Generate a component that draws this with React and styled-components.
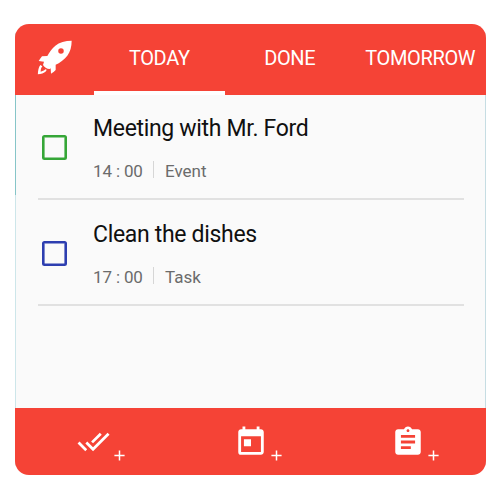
import React from "react";
import styled, { createGlobalStyle } from "styled-components";
import { MdDoneAll, MdToday, MdAssignment } from "react-icons/md";

const RED = "#f54336";

const GlobalStyle = createGlobalStyle`
  * { box-sizing: border-box; }
  body { margin: 0; background: #fff; font-family: Roboto, sans-serif; }
`;

const Page = styled.div`
  width: 500px;
  height: 500px;
  padding: 24px 14px 25.5px 15px;
  overflow: hidden;
`;

const Card = styled.main`
  display: flex;
  flex-direction: column;
  height: 450.5px;
  border-radius: 14px;
  overflow: hidden;
  background:
    linear-gradient(#86c5c8, #86c5c8) 0 0 / 1px 171px no-repeat,
    linear-gradient(90deg, #cde6ea 1px, #fafafa 1px, #fafafa calc(100% - 1px), #c6dde3 calc(100% - 1px));
`;

const Header = styled.header`
  display: flex;
  height: 71px;
  background: ${RED};
`;

const Logo = styled.div`
  width: 79px;
  flex: none;
  padding: 14.7px 0 0 21px;
  svg { display: block; }
`;

const Tab = styled.div`
  flex: none;
  width: 130.5px;
  height: 71px;
  padding-top: 22px;
  border-bottom: 4px solid ${(p) => (p.$active ? "#fff" : "transparent")};
  color: #fff;
  font-size: 20px;
  line-height: 24px;
  text-align: center;
  white-space: nowrap;
  letter-spacing: -0.35px;
`;

const List = styled.section`
  flex: 1;
  padding: 0 22px 0 23px;
`;

const Row = styled.article`
  display: flex;
  height: ${(p) => p.$height}px;
  padding-top: ${(p) => p.$top}px;
  border-bottom: 2px solid #e1e1e1;
`;

const Check = styled.span`
  flex: none;
  width: 25px;
  height: 25px;
  margin: 21px 26px 0 4px;
  border: 2px solid ${(p) => p.$color};
  box-shadow: inset 0 0 0 0.6px ${(p) => p.$color};
  border-radius: 2.5px;
`;

const Title = styled.h2`
  margin: 1px 0 0;
  color: #101010;
  font-size: 23px;
  font-weight: 400;
  line-height: 28px;
  letter-spacing: -0.32px;
  white-space: nowrap;
`;

const Meta = styled.div`
  display: flex;
  align-items: center;
  margin-top: 18px;
  height: 20px;
  color: #6b6b6b;
  font-size: 17px;
  line-height: 20px;
`;

const Time = styled.span`
  width: 60px;
  letter-spacing: -0.15px;
  white-space: nowrap;
`;

const Kind = styled.span`
  height: 20px;
  padding-left: 11px;
`;

const Divider = styled.span`
  width: 1px;
  height: 17px;
  margin-top: -3px;
  background: #d6d6d6;
`;

const Footer = styled.footer`
  display: grid;
  grid-template-columns: repeat(3, 1fr);
  height: 66.5px;
  background: ${RED};
`;

const Action = styled.div`
  position: relative;
  display: flex;
  justify-content: center;
  padding-top: 16.5px;
  color: #fff;
`;

const PlusBadge = styled.svg`
  position: absolute;
  left: 98.5px;
  top: 42px;
  width: 11px;
  height: 11px;
`;

function Rocket() {
  return (
    <svg width="37.333" height="36.667" viewBox="108 86 112 110">
      <path
        fill="#fff"
        fillRule="evenodd"
        d="M215 91C196 91 178 96 166 106C156 114 148 126 142 137L126 138C123 142 119 147 116 152L132 154L129 164C133 171 140 176 149 176L152 174L153 190C159 187 163 183 167 179L167 163C179 158 193 148 202 136C211 124 215 109 215 91ZM183 114A8.3 8.3 0 1 1 183 130.600A8.300 8.300 0 1 1 183 114Z"
      />
      <path
        fill="#fff"
        d="M121 164C116 170 114 181 113.500 192C123 192 132 189 138 183L140 178L136 177C132 181 127 183 122 184C122 178 123 173 127 168Z"
      />
    </svg>
  );
}

function Plus() {
  return (
    <PlusBadge viewBox="0 0 11 11">
      <path d="M5.500 0.400V10.600M0.400 5.500H10.600" stroke="#fff" strokeWidth="1.500" />
    </PlusBadge>
  );
}

const tasks = [
  { title: "Meeting with Mr. Ford", time: "14 : 00", kind: "Event", color: "#35a637", height: 105, top: 19 },
  { title: "Clean the dishes", time: "17 : 00", kind: "Task", color: "#2d3eb0", height: 106, top: 20 },
];

export default function App() {
  return (
    <>
      <GlobalStyle />
      <Page>
        <Card>
          <Header>
            <Logo><Rocket /></Logo>
            <Tab $active>TODAY</Tab>
            <Tab>DONE</Tab>
            <Tab>TOMORROW</Tab>
          </Header>
          <List>
            {tasks.map((t) => (
              <Row key={t.title} $height={t.height} $top={t.top}>
                <Check $color={t.color} />
                <div>
                  <Title>{t.title}</Title>
                  <Meta>
                    <Time>{t.time}</Time>
                    <Divider />
                    <Kind>{t.kind}</Kind>
                  </Meta>
                </div>
              </Row>
            ))}
          </List>
          <Footer>
            <Action><MdDoneAll size={33} /><Plus /></Action>
            <Action><MdToday size={34} /><Plus /></Action>
            <Action><MdAssignment size={34} /><Plus /></Action>
          </Footer>
        </Card>
      </Page>
    </>
  );
}
